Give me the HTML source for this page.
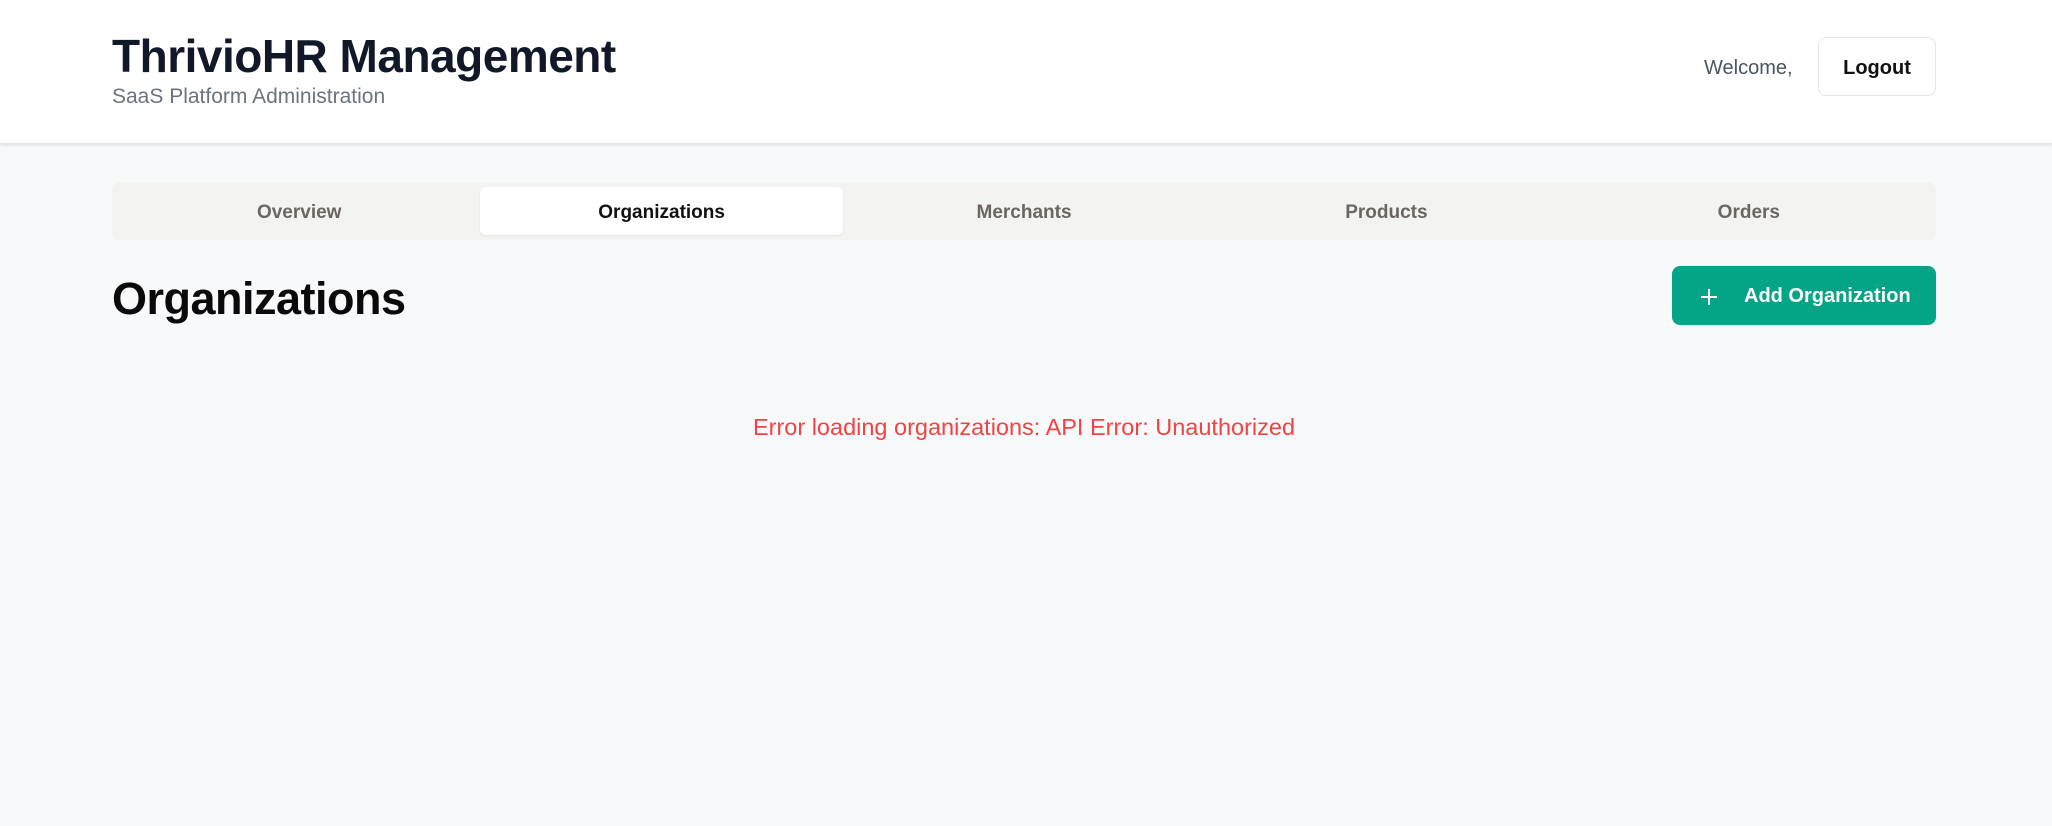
<!DOCTYPE html>
<html><head><meta charset="utf-8"><style>
*{box-sizing:border-box;margin:0;padding:0}
body{width:2052px;height:826px;background:#f8f9fa;font-family:"Liberation Sans",sans-serif;overflow:hidden;position:relative}
.hdr{position:absolute;left:0;top:0;width:2052px;height:144px;background:#fff;box-shadow:0 1px 3px rgba(0,0,0,.12);border-bottom:1px solid #e5e7eb}
.t{position:absolute;left:112px;top:29px;font-size:46px;font-weight:bold;color:#111827;letter-spacing:-0.5px}
.s{position:absolute;left:112px;top:85px;font-size:21px;color:#6b7280}
.w{position:absolute;left:1704px;top:57px;font-size:20px;color:#4b5563}
.lo{position:absolute;left:1818px;top:37px;width:118px;height:59px;border:1px solid #e5e7eb;border-radius:8px;background:#fff;font-size:20px;font-weight:bold;color:#111;display:flex;align-items:center;justify-content:center;padding-top:4px}
.tabs{position:absolute;left:112px;top:182px;width:1824px;height:58px;background:#f3f3f1;border-radius:8px;display:flex;padding:5px 6px}
.tab{flex:1;display:flex;align-items:center;justify-content:center;font-size:19px;font-weight:bold;color:#6b6661;border-radius:6px;padding-top:4px}
.tab.a{background:#fff;color:#111;box-shadow:0 1px 2px rgba(0,0,0,.06)}
.h{position:absolute;left:112px;top:273px;font-size:45px;font-weight:bold;color:#0a0a0a;letter-spacing:-0.5px}
.btn{position:absolute;left:1672px;top:266px;width:264px;height:59px;background:#04a486;border-radius:8px;color:#fff;font-size:20px;font-weight:bold;display:flex;align-items:center;padding-top:2px}
.err{position:absolute;left:0;width:2048px;top:414px;text-align:center;font-size:23.5px;color:#ef4444}
</style></head><body>
<div class="hdr">
<div class="t">ThrivioHR Management</div>
<div class="s">SaaS Platform Administration</div>
<div class="w">Welcome,</div>
<div class="lo">Logout</div>
</div>
<div class="tabs">
<div class="tab">Overview</div><div class="tab a">Organizations</div><div class="tab">Merchants</div><div class="tab">Products</div><div class="tab">Orders</div>
</div>
<div class="h">Organizations</div>
<div class="btn"><svg style="margin-left:28px" width="18" height="18" viewBox="0 0 18 18"><path d="M9 1v16M1 9h16" stroke="#fff" stroke-width="2"/></svg><span style="margin-left:26px">Add Organization</span></div>
<div class="err">Error loading organizations: API Error: Unauthorized</div>
</body></html>
